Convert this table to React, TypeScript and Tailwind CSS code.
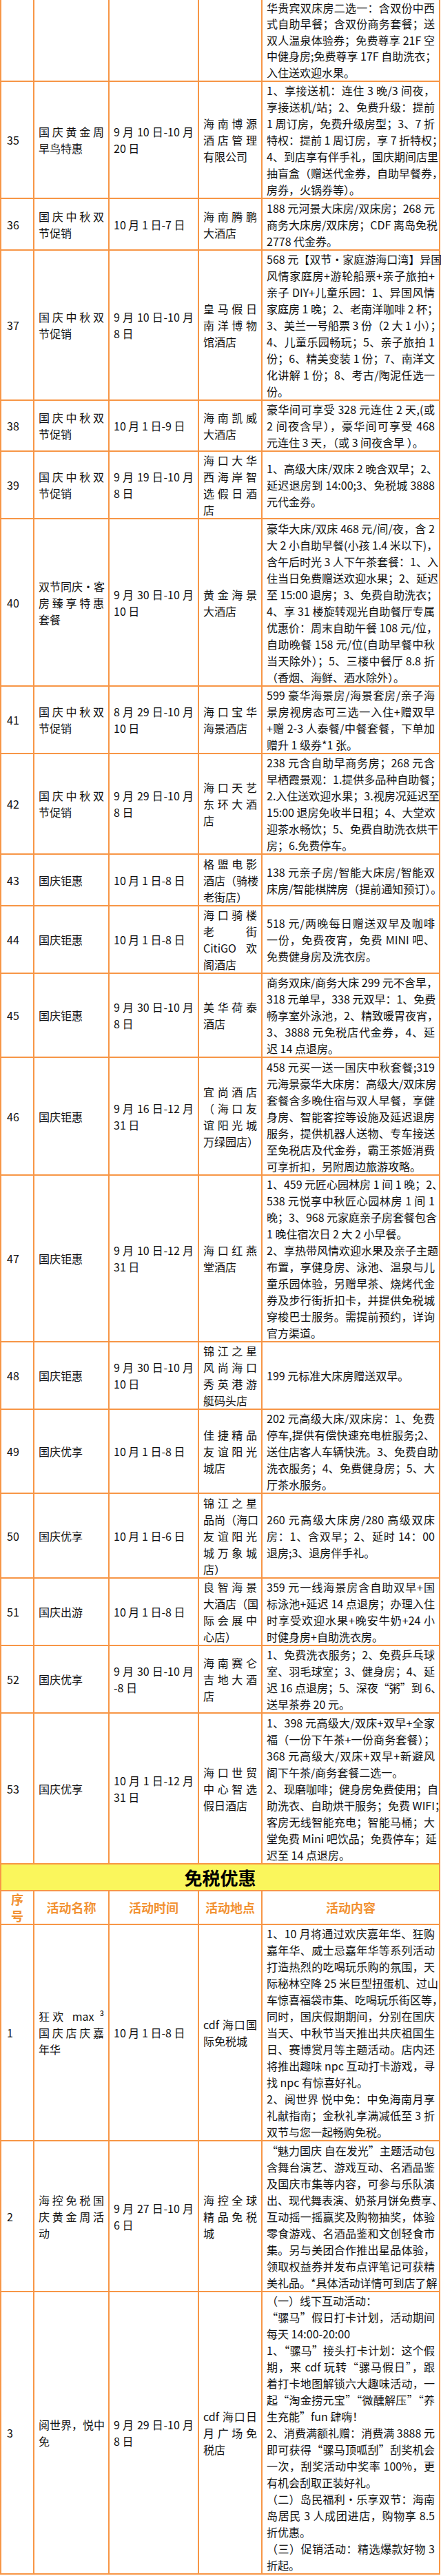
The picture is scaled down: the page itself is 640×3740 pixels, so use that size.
import * as React from "react";

type Row = {
  no: string;
  name: string[];
  time: string[];
  place: string[];
  content: string[];
};

// "¶" at the end of a line marks a paragraph end: that line is not justified
const hotelRows: Row[] = [
  {
    no: "35",
    name: ["国庆黄金周", "早鸟特惠"],
    time: ["9 月 10 日-10 月", "20 日"],
    place: ["海南博源", "酒店管理", "有限公司"],
    content: [
      "1、享接送机：连住 3 晚/3 间夜，",
      "享接送机/站；2、免费升级：提前",
      "1 周订房，免费升级房型；3、7 折",
      "特权：提前 1 周订房，享 7 折特权；",
      "4、到店享有伴手礼，国庆期间店里",
      "抽盲盒（赠送代金券，自助早餐券，",
      "房券，火锅券等）。",
    ],
  },
  {
    no: "36",
    name: ["国庆中秋双", "节促销"],
    time: ["10 月 1 日-7 日"],
    place: ["海南腾鹏", "大酒店"],
    content: [
      "188 元河景大床房/双床房；268 元",
      "商务大床房/双床房；CDF 离岛免税",
      "2778 代金券。",
    ],
  },
  {
    no: "37",
    name: ["国庆中秋双", "节促销"],
    time: ["9 月 10 日-10 月", "8 日"],
    place: ["皇马假日", "南洋博物", "馆酒店"],
    content: [
      "568 元【双节·家庭游海口湾】异国",
      "风情家庭房+游轮船票+亲子旅拍+",
      "亲子 DIY+儿童乐园：1、异国风情",
      "家庭房 1 晚；2、老南洋咖啡 2 杯；",
      "3、美兰一号船票 3 份（2 大 1 小）；",
      "4、儿童乐园畅玩；5、亲子旅拍 1",
      "份；6、精美变装 1 份；7、南洋文",
      "化讲解 1 份；8、考古/陶泥任选一",
      "份。",
    ],
  },
  {
    no: "38",
    name: ["国庆中秋双", "节促销"],
    time: ["10 月 1 日-9 日"],
    place: ["海南凯威", "大酒店"],
    content: [
      "豪华间可享受 328 元连住 2 天,(或",
      "2 间夜含早），豪华间可享受 468",
      "元连住 3 天，（或 3 间夜含早 ）。",
    ],
  },
  {
    no: "39",
    name: ["国庆中秋双", "节促销"],
    time: ["9 月 19 日-10 月", "8 日"],
    place: ["海口大华", "西海岸智", "选假日酒", "店"],
    content: [
      "1、高级大床/双床 2 晚含双早；2、",
      "延迟退房到 14:00;3、免税城 3888",
      "元代金券。",
    ],
  },
  {
    no: "40",
    name: ["双节同庆•客", "房臻享特惠", "套餐"],
    time: ["9 月 30 日-10 月", "10 日"],
    place: ["黄金海景", "大酒店"],
    content: [
      "豪华大床/双床 468 元/间/夜，含 2",
      "大 2 小自助早餐(小孩 1.4 米以下)，",
      "含午后时光 3 人下午茶套餐：1、入",
      "住当日免费赠送欢迎水果；2、延迟",
      "至 15:00 退房；3、免费自助洗衣；",
      "4、享 31 楼旋转观光自助餐厅专属",
      "优惠价：周末自助午餐 108 元/位，",
      "自助晚餐 158 元/位(自助早餐中秋",
      "当天除外）；5、三楼中餐厅 8.8 折",
      "（香烟、海鲜、酒水除外）。",
    ],
  },
  {
    no: "41",
    name: ["国庆中秋双", "节促销"],
    time: ["8 月 29 日-10 月", "10 日"],
    place: ["海口宝华", "海景酒店"],
    content: [
      "599 豪华海景房/海景套房/亲子海",
      "景房视房态可三选一入住+赠双早",
      "+赠 2-3 人泰餐/中餐套餐，下单加",
      "赠升 1 级券*1 张。",
    ],
  },
  {
    no: "42",
    name: ["国庆中秋双", "节促销"],
    time: ["9 月 29 日-10 月", "8 日"],
    place: ["海口天艺", "东环大酒", "店"],
    content: [
      "238 元含自助早商务房；268 元含",
      "早栖霞景观：1.提供多品种自助餐；",
      "2.入住送欢迎水果；3.视房况延迟至",
      "15:00 退房免收半日租；4、大堂欢",
      "迎茶水畅饮；5、免费自助洗衣烘干",
      "房；6.免费停车。",
    ],
  },
  {
    no: "43",
    name: ["国庆钜惠"],
    time: ["10 月 1 日-8 日"],
    place: ["格盟电影", "酒店（骑楼", "老街店）"],
    content: [
      "138 元亲子房/智能大床房/智能双",
      "床房/智能棋牌房（提前通知预订）。",
    ],
  },
  {
    no: "44",
    name: ["国庆钜惠"],
    time: ["10 月 1 日-8 日"],
    place: ["海口骑楼", "老街", "CitiGO 欢", "阁酒店"],
    content: [
      "518 元/两晚每日赠送双早及咖啡",
      "一份，免费夜宵，免费 MINI 吧、",
      "免费健身房及洗衣房。",
    ],
  },
  {
    no: "45",
    name: ["国庆钜惠"],
    time: ["9 月 30 日-10 月", "8 日"],
    place: ["美华荷泰", "酒店"],
    content: [
      "商务双床/商务大床 299 元不含早，",
      "318 元单早，338 元双早：1、免费",
      "畅享室外泳池，2、精致暖胃夜宵，",
      "3、3888 元免税店代金券，4、延",
      "迟 14 点退房。",
    ],
  },
  {
    no: "46",
    name: ["国庆钜惠"],
    time: ["9 月 16 日-12 月", "31 日"],
    place: ["宜尚酒店", "（海口友", "谊阳光城", "万绿园店）"],
    content: [
      "458 元买一送一国庆中秋套餐;319",
      "元海景豪华大床房：高级大/双床房",
      "套餐含多晚住宿与双人早餐，享健",
      "身房、智能客控等设施及延迟退房",
      "服务，提供机器人送物、专车接送",
      "至免税店及代金券，霸王茶姬消费",
      "可享折扣，另附周边旅游攻略。",
    ],
  },
  {
    no: "47",
    name: ["国庆钜惠"],
    time: ["9 月 10 日-12 月", "31 日"],
    place: ["海口红燕", "堂酒店"],
    content: [
      "1、459 元匠心园林房 1 间 1 晚；2、",
      "538 元悦享中秋匠心园林房 1 间 1",
      "晚；3、968 元家庭亲子房套餐包含",
      "1 晚住宿次日 2 大 2 小早餐。¶",
      "2、享热带风情欢迎水果及亲子主题",
      "布置，享健身房、泳池、温泉与儿",
      "童乐园体验，另赠早茶、烧烤代金",
      "券及步行街折扣卡，并提供免税城",
      "穿梭巴士服务。需提前预约，详询",
      "官方渠道。",
    ],
  },
  {
    no: "48",
    name: ["国庆钜惠"],
    time: ["9 月 30 日-10 月", "10 日"],
    place: ["锦江之星", "风尚海口", "秀英港游", "艇码头店"],
    content: ["199 元标准大床房赠送双早。"],
  },
  {
    no: "49",
    name: ["国庆优享"],
    time: ["10 月 1 日-8 日"],
    place: ["佳捷精品", "友谊阳光", "城店"],
    content: [
      "202 元高级大床/双床房：1、免费",
      "停车,提供有偿快速充电桩服务;2、",
      "送住店客人车辆快洗。3、免费自助",
      "洗衣服务；4、免费健身房；5、大",
      "厅茶水服务。",
    ],
  },
  {
    no: "50",
    name: ["国庆优享"],
    time: ["10 月 1 日-6 日"],
    place: ["锦江之星", "品尚（海口", "友谊阳光", "城万象城", "店）"],
    content: [
      "260 元高级大床房/280 高级双床",
      "房：1、含双早；2、延时 14：00",
      "退房;3、退房伴手礼。",
    ],
  },
  {
    no: "51",
    name: ["国庆出游"],
    time: ["10 月 1 日-8 日"],
    place: ["良智海景", "大酒店（国", "际会展中", "心店）"],
    content: [
      "359 元一线海景房含自助双早+国",
      "标泳池+延迟 14 点退房；办理入住",
      "时享受欢迎水果+晚安牛奶+24 小",
      "时健身房+自助洗衣房。",
    ],
  },
  {
    no: "52",
    name: ["国庆优享"],
    time: ["9 月 30 日-10 月", "-8 日"],
    place: ["海南赛仑", "吉地大酒", "店"],
    content: [
      "1、免费洗衣服务；2、免费乒乓球",
      "室、羽毛球室；3、健身房；4、延",
      "迟 16 点退房；5、深夜“粥”到 6、",
      "送早茶券 20 元。",
    ],
  },
  {
    no: "53",
    name: ["国庆优享"],
    time: ["10 月 1 日-12 月", "31 日"],
    place: ["海口世贸", "中心智选", "假日酒店"],
    content: [
      "1、398 元高级大/双床+双早+全家",
      "福（一份下午茶+一份商务套餐）；",
      "368 元高级大/双床+双早+新避风",
      "阁下午茶/商务套餐二选一。¶",
      "2、现磨咖啡；健身房免费使用；自",
      "助洗衣、自助烘干服务；免费 WIFI；",
      "客房无线智能充电；智能马桶；大",
      "堂免费 Mini 吧饮品；免费停车；延",
      "迟至 14 点退房。",
    ],
  },
];

const dutyFreeRows: Row[] = [
  {
    no: "1",
    name: ["狂欢 max ³", "国庆店庆嘉", "年华"],
    time: ["10 月 1 日-8 日"],
    place: ["cdf 海口国", "际免税城"],
    content: [
      "1、10 月将通过欢庆嘉年华、狂购",
      "嘉年华、威士忌嘉年华等系列活动",
      "打造热烈的吃喝玩乐购的氛围，天",
      "际秘林空降 25 米巨型扭蛋机、过山",
      "车惊喜福袋市集、吃喝玩乐街区等，",
      "同时，国庆假期期间，分别在国庆",
      "当天、中秋节当天推出共庆祖国生",
      "日、赛博赏月等主题活动。店内还",
      "将推出趣味 npc 互动打卡游戏，寻",
      "找 npc 有惊喜好礼。¶",
      "2、阅世界 悦中免：中免海南月享",
      "礼献指南；金秋礼享满减低至 3 折",
      "双节与您一起畅购免税。",
    ],
  },
  {
    no: "2",
    name: ["海控免税国", "庆黄金周活", "动"],
    time: ["9 月 27 日-10 月", "6 日"],
    place: ["海控全球", "精品免税", "城"],
    content: [
      "“魅力国庆 自在发光”主题活动包",
      "含舞台演艺、游戏互动、名酒品鉴",
      "及国庆市集等内容，可参与乐队演",
      "出、现代舞表演、奶茶月饼免费享、",
      "互动摇一摇赢奖及购物抽奖，体验",
      "零食游戏、名酒品鉴和文创轻食市",
      "集。另与美团合作推出星品体验，",
      "领取权益券并发布点评笔记可获精",
      "美礼品。*具体活动详情可到店了解",
    ],
  },
  {
    no: "3",
    name: ["阅世界，悦中", "免"],
    time: ["9 月 29 日-10 月", "8 日"],
    place: ["cdf 海口日", "月广场免", "税店"],
    content: [
      "（一）线下互动活动：¶",
      "“骡马”假日打卡计划，活动期间",
      "每天 14:00-20:00¶",
      "1、“骡马”接头打卡计划：这个假",
      "期，来 cdf 玩转“骡马假日”，跟",
      "着打卡地图解锁六大趣味活动，一",
      "起“淘金捞元宝”“微醺解压”“养",
      "生充能”fun 肆嗨！¶",
      "2、消费满额礼赠：消费满 3888 元",
      "即可获得“骡马顶呱刮”刮奖机会",
      "一次，刮奖活动中奖率 100%，更",
      "有机会刮取正装好礼。¶",
      "（二）岛民福利·乐享双节：海南",
      "岛居民 3 人成团进店，购物享 8.5",
      "折优惠。¶",
      "（三）促销活动：精选爆款好物 3",
      "折起。",
    ],
  },
];

function Lines({ lines }: { lines: string[] }) {
  return (
    <>
      {lines.map((raw, i) => {
        const paraEnd = raw.endsWith("¶");
        const text = paraEnd ? raw.slice(0, -1) : raw;
        const justify = i < lines.length - 1 && !paraEnd;
        return (
          <div
            key={i}
            className={
              justify
                ? "h-[24px] whitespace-nowrap text-justify [text-align-last:justify]"
                : "h-[24px] whitespace-nowrap text-left"
            }
          >
            {text}
          </div>
        );
      })}
    </>
  );
}

const cell = "border-2 border-[#f79646] px-[6px] pt-[0.3px] pb-0 align-middle";

function DataRow({ row }: { row: Row }) {
  return (
    <tr>
      <td className={cell}>
        <div className="h-[24px] pl-[2px]">{row.no}</div>
      </td>
      <td className={cell}>
        <Lines lines={row.name} />
      </td>
      <td className={cell}>
        <Lines lines={row.time} />
      </td>
      <td className={cell}>
        <Lines lines={row.place} />
      </td>
      <td className={cell}>
        <Lines lines={row.content} />
      </td>
    </tr>
  );
}

export default function App() {
  return (
    <div className="w-[640px] bg-white text-[16px] leading-[24px] text-[#111] font-['Noto_Sans_CJK_SC','Noto_Sans',sans-serif]">
      <table className="w-[639px] table-fixed border-collapse">
        <colgroup>
          <col className="w-[48px]" />
          <col className="w-[109px]" />
          <col className="w-[130px]" />
          <col className="w-[92px]" />
          <col className="w-[258px]" />
        </colgroup>
        <tbody>
          {/* tail of row 34, cut off by the top of the page */}
          <tr>
            <td className="border-2 border-t-0 border-[#f79646]"></td>
            <td className="border-2 border-t-0 border-[#f79646]"></td>
            <td className="border-2 border-t-0 border-[#f79646]"></td>
            <td className="border-2 border-t-0 border-[#f79646]"></td>
            <td className="border-2 border-t-0 border-[#f79646] px-[6px] pt-0 pb-0 align-top">
              <div className="h-[117px] leading-[23.4px]">
                {[
                  "华贵宾双床房二选一：含双份中西",
                  "式自助早餐；含双份商务套餐；送",
                  "双人温泉体验券；免费尊享 21F 空",
                  "中健身房;免费尊享 17F 自助洗衣；",
                ].map((l) => (
                  <div key={l} className="whitespace-nowrap text-justify [text-align-last:justify]">
                    {l}
                  </div>
                ))}
                <div className="whitespace-nowrap">入住送欢迎水果。</div>
              </div>
            </td>
          </tr>

          {hotelRows.map((r) => (
            <DataRow key={r.no} row={r} />
          ))}

          {/* 免税优惠 section */}
          <tr>
            <td
              colSpan={5}
              className="h-[39.5px] border-2 border-[#f79646] bg-[#faf65c] p-0 text-center text-[26px] font-bold leading-[37px] text-black"
            >
              免税优惠
            </td>
          </tr>
          <tr className="text-[18px] font-bold leading-[23.5px] text-[#f29233]">
            <td className="border-2 border-[#f79646] px-0 py-0 text-center align-middle">
              <div>序</div>
              <div>号</div>
            </td>
            <td className="border-2 border-[#f79646] px-0 py-0 text-center align-middle">活动名称</td>
            <td className="border-2 border-[#f79646] px-0 py-0 text-center align-middle">活动时间</td>
            <td className="border-2 border-[#f79646] px-0 py-0 text-center align-middle">活动地点</td>
            <td className="border-2 border-[#f79646] px-0 py-0 text-center align-middle">活动内容</td>
          </tr>

          {dutyFreeRows.map((r) => (
            <DataRow key={`df-${r.no}`} row={r} />
          ))}
        </tbody>
      </table>
    </div>
  );
}
